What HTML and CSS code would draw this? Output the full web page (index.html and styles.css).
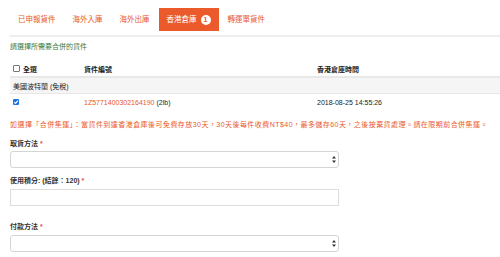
FILE: index.html
```html
<!DOCTYPE html>
<html lang="zh-Hant">
<head>
    <meta charset="UTF-8">
    <meta name="viewport" content="width=device-width, initial-scale=1.0">
    <title>香港倉庫</title>
    <link rel="stylesheet" href="styles.css">
</head>
<body>
    <div class="page">
        <ul class="tabs">
            <li class="tab">已申報貨件</li>
            <li class="tab">海外入庫</li>
            <li class="tab">海外出庫</li>
            <li class="tab active">香港倉庫 <span class="badge">1</span></li>
            <li class="tab">轉運單貨件</li>
        </ul>
        <div class="tabs-line"></div>

        <p class="hint">請選擇所需要合併的貨件</p>

        <div class="table">
            <div class="row head">
                <div class="cell"><span class="check"></span>全選</div>
                <div class="cell">貨件編號</div>
                <div class="cell">香港倉庫時間</div>
            </div>
            <div class="row group">
                <div class="cell">美國波特蘭 (免稅)</div>
            </div>
            <div class="row item">
                <div class="cell">
                    <span class="check checked">
                        <svg width="6" height="6" viewBox="0 0 6 6"><path d="M1.2 3.1 L2.5 4.4 L4.9 1.6" fill="none" stroke="#fff" stroke-width="1.1"/></svg>
                    </span>
                </div>
                <div class="cell"><span class="track">1Z5771400302164190</span> (2lb)</div>
                <div class="cell">2018-08-25 14:55:26</div>
            </div>
        </div>

        <p class="notice">如選擇「合併集運」：當貨件到達香港倉庫後可免費存放30天，30天後每件收費NT$40，最多儲存60天，之後按棄貨處理。請在限期前合併集運。</p>

        <div class="field first">
            <label class="label">取貨方法 <span class="req">*</span></label>
            <div class="select-wrap">
                <select class="control"></select>
                <svg class="arrows" width="4" height="7" viewBox="0 0 4 7"><path d="M2 0 L4 2.6 L0 2.6 Z M2 7 L4 4.4 L0 4.4 Z" fill="#333"/></svg>
            </div>
        </div>

        <div class="field">
            <label class="label">使用積分: (結餘：120) <span class="req">*</span></label>
            <input class="control input" type="text">
        </div>

        <div class="field last">
            <label class="label">付款方法 <span class="req">*</span></label>
            <div class="select-wrap">
                <select class="control"></select>
                <svg class="arrows" width="4" height="7" viewBox="0 0 4 7"><path d="M2 0 L4 2.6 L0 2.6 Z M2 7 L4 4.4 L0 4.4 Z" fill="#333"/></svg>
            </div>
        </div>
    </div>
</body>
</html>
```

FILE: styles.css
```css
body {
    margin: 0;
    font-family: "Liberation Sans", "Noto Sans CJK TC", sans-serif;
    font-size: 7px;
    color: #222;
    background: #fff;
}
.page {
    padding-left: 10px;
}
.tabs {
    display: flex;
    list-style: none;
    margin: 0;
    padding: 8px 0 0 0;
}
.tab {
    height: 23px;
    line-height: 23px;
    padding: 0 8px;
    margin-right: 1px;
    font-size: 7.5px;
    color: #e9582c;
    display: flex;
    align-items: center;
}
.tab.active {
    background: #ea5a2b;
    color: #fff;
}
.badge {
    display: inline-flex;
    align-items: center;
    justify-content: center;
    width: 10px;
    height: 10px;
    margin-left: 4px;
    border-radius: 50%;
    background: #fff;
    color: #ea5a2b;
    font-weight: bold;
    font-size: 7px;
    line-height: 1;
}
.tabs-line {
    margin-top: 4px;
    border-top: 2px solid #eee;
}
.hint {
    margin: 5px 0 0 0;
    line-height: 10px;
    color: #3c7a3e;
}
.table {
    margin-top: 9px;
}
.row {
    display: grid;
    grid-template-columns: 71px 233px 1fr;
    align-items: center;
}
.cell {
    padding: 0 3px;
    display: flex;
    align-items: center;
}
.row.head {
    height: 15px;
    border-bottom: 2px solid #e8e8e8;
    font-weight: bold;
}
.row.group {
    height: 15px;
    background: #f5f5f5;
    border-bottom: 1px solid #e8e8e8;
    grid-template-columns: 1fr;
}
.row.item {
    height: 16px;
}
.check {
    display: inline-flex;
    align-items: center;
    justify-content: center;
    width: 5px;
    height: 5px;
    border: 0.5px solid #777;
    border-radius: 1px;
    margin-right: 3px;
    background: #fff;
}
.check.checked {
    width: 6px;
    height: 6px;
    border: none;
    background: #1b73e8;
}
.track {
    color: #e9582c;
    margin-right: 2px;
}
.notice {
    margin: 10px 0 0 0;
    line-height: 10px;
    color: #ea5a2b;
    letter-spacing: 0.45px;
}
.field {
    width: 329px;
    margin-top: 8px;
}
.field.first {
    margin-top: 9px;
}
.field.last {
    margin-top: 16px;
}
.label {
    display: block;
    line-height: 10px;
    font-weight: bold;
    color: #333;
    margin-bottom: 3px;
}
.field.first .label {
    margin-bottom: 2px;
}
.req {
    color: #d9534f;
}
.select-wrap {
    position: relative;
}
.control {
    display: block;
    box-sizing: border-box;
    width: 329px;
    height: 17px;
    margin: 0;
    border: 1px solid #d4d4d4;
    border-radius: 3px;
    background: #fff;
    appearance: none;
    -webkit-appearance: none;
    font: inherit;
}
.input {
    border-radius: 0;
    border-color: #ddd;
}
.arrows {
    position: absolute;
    right: 3px;
    top: 5px;
}
```
